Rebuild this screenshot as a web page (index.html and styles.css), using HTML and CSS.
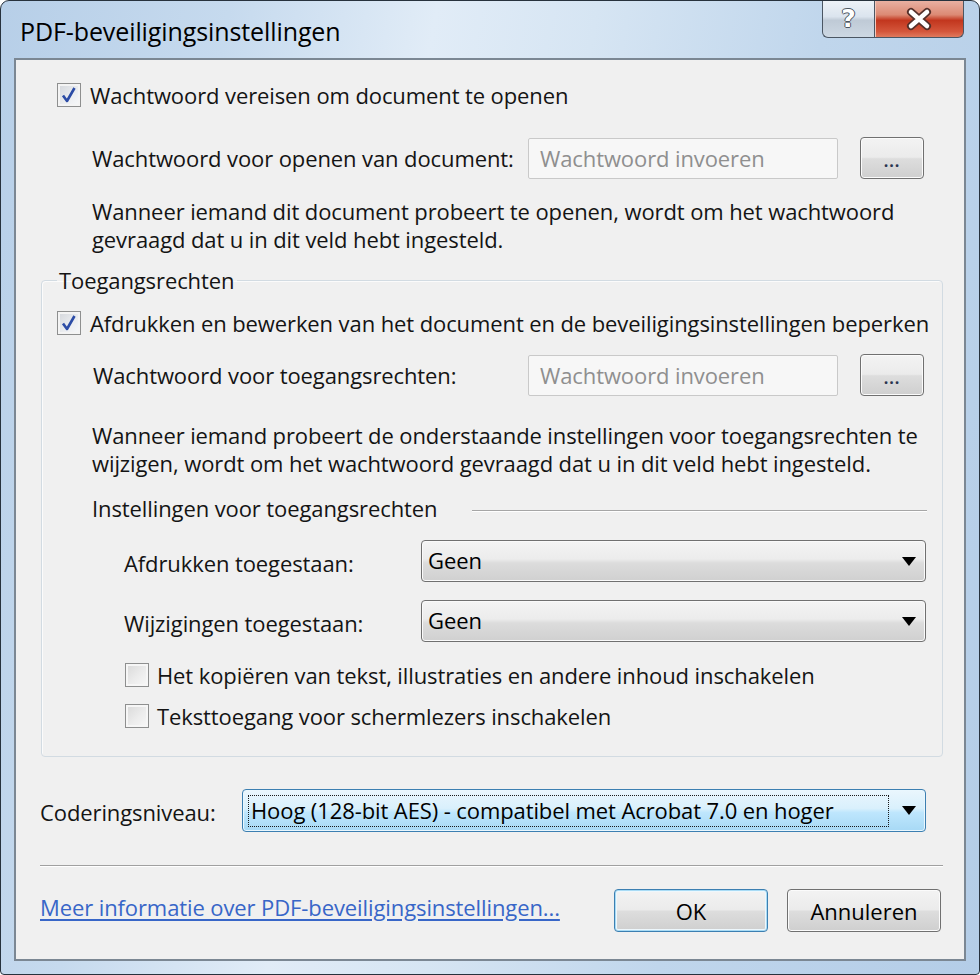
FILE: index.html
```html
<!DOCTYPE html>
<html lang="nl">
<head>
<meta charset="utf-8">
<title>PDF-beveiligingsinstellingen</title>
<link rel="stylesheet" href="styles.css">
</head>
<body>
<div class="window">
  <div class="titlebar">
    <div class="title">PDF-beveiligingsinstellingen</div>
    <div class="caption">
      <div class="cap-btn help"><span class="help-glyph">?</span></div>
      <div class="cap-btn close">
        <svg class="close-x" width="32" height="24" viewBox="0 0 32 24">
          <path d="M8 5 L24 19 M24 5 L8 19" stroke="#55302a" stroke-width="8" stroke-linecap="round" fill="none"/>
          <path d="M8 5 L24 19 M24 5 L8 19" stroke="#ffffff" stroke-width="4.5" stroke-linecap="round" fill="none"/>
        </svg>
      </div>
    </div>
  </div>

  <div class="client">
    <div class="check-row first">
      <span class="cb"><svg class="tick" width="22" height="22" viewBox="0 0 22 22"><path d="M5 11.5 L9 17 L16.5 4" stroke="#2c4ca6" stroke-width="2.6" fill="none" stroke-linejoin="round"/></svg></span>
      <span>Wachtwoord vereisen om document te openen</span>
    </div>

    <div class="pw-row outer">
      <span class="pw-label">Wachtwoord voor openen van document:</span>
      <span class="field">Wachtwoord invoeren</span>
      <span class="btn dots">...</span>
    </div>

    <p class="desc first-desc">Wanneer iemand dit document probeert te openen, wordt om het wachtwoord<br>gevraagd dat u in dit veld hebt ingesteld.</p>

    <fieldset class="group">
      <legend>Toegangsrechten</legend>

      <div class="check-row in-group">
        <span class="cb"><svg class="tick" width="22" height="22" viewBox="0 0 22 22"><path d="M5 11.5 L9 17 L16.5 4" stroke="#2c4ca6" stroke-width="2.6" fill="none" stroke-linejoin="round"/></svg></span>
        <span>Afdrukken en bewerken van het document en de beveiligingsinstellingen beperken</span>
      </div>

      <div class="pw-row inner">
        <span class="pw-label">Wachtwoord voor toegangsrechten:</span>
        <span class="field">Wachtwoord invoeren</span>
        <span class="btn dots">...</span>
      </div>

      <p class="desc second-desc">Wanneer iemand probeert de onderstaande instellingen voor toegangsrechten te<br>wijzigen, wordt om het wachtwoord gevraagd dat u in dit veld hebt ingesteld.</p>

      <div class="subhead">
        <span>Instellingen voor toegangsrechten</span>
        <span class="subline"></span>
      </div>

      <div class="combo-row first-combo">
        <span class="combo-label">Afdrukken toegestaan:</span>
        <span class="combo"><span class="combo-text">Geen</span><span class="arrow"></span></span>
      </div>

      <div class="combo-row second-combo">
        <span class="combo-label">Wijzigingen toegestaan:</span>
        <span class="combo"><span class="combo-text">Geen</span><span class="arrow"></span></span>
      </div>

      <div class="check-row sub-check copy-check">
        <span class="cb empty"></span>
        <span>Het kopiëren van tekst, illustraties en andere inhoud inschakelen</span>
      </div>

      <div class="check-row sub-check reader-check">
        <span class="cb empty"></span>
        <span>Teksttoegang voor schermlezers inschakelen</span>
      </div>
    </fieldset>

    <div class="enc-row">
      <span class="enc-label">Coderingsniveau:</span>
      <span class="combo focused"><span class="focus-rect">Hoog (128-bit AES) - compatibel met Acrobat 7.0 en hoger</span><span class="arrow"></span></span>
    </div>

    <div class="sep"></div>

    <div class="footer">
      <a class="more-link" href="#">Meer informatie over PDF-beveiligingsinstellingen...</a>
      <span class="btn push default">OK</span>
      <span class="btn push">Annuleren</span>
    </div>
  </div>
</div>
</body>
</html>
```

FILE: styles.css
```css
* {
  box-sizing: border-box;
}

html, body {
  margin: 0;
  padding: 0;
  background: #ffffff;
}

body {
  font-family: "Open Sans", "Noto Sans", "Liberation Sans", sans-serif;
  font-size: 22px;
  letter-spacing: -0.1px;
  color: #141414;
}

.window {
  width: 980px;
  height: 975px;
  border: 1px solid #27323d;
  border-radius: 9px 9px 4px 4px;
  background: linear-gradient(100deg, #b7cfe8 0%, #c6daee 20%, #e1ecf7 38%, #d6e5f3 52%, #c0d6ec 72%, #b4cde7 100%);
  display: flex;
  flex-direction: column;
  overflow: hidden;
}

/* ---------- title bar ---------- */
.titlebar {
  height: 57px;
  display: flex;
  justify-content: space-between;
  align-items: flex-start;
}

.title {
  padding: 13px 0 0 19px;
  font-size: 25px;
  letter-spacing: -0.1px;
  color: #000000;
}

.caption {
  display: flex;
  margin-right: 15px;
  margin-top: -1px;
}

.cap-btn {
  height: 38px;
  border: 1px solid #4b5663;
  border-top: none;
  display: flex;
  align-items: center;
  justify-content: center;
}

.help {
  width: 52px;
  border-radius: 0 0 0 6px;
  border-right: none;
  background: linear-gradient(#eef3f8 0%, #dbe4ee 45%, #bfcad6 55%, #cdd8e3 100%);
}

.help-glyph {
  font-family: "DejaVu Sans", sans-serif;
  font-size: 25px;
  font-weight: bold;
  color: #ffffff;
  letter-spacing: 0;
  text-shadow: 1px 0 #4a5560, -1px 0 #4a5560, 0 1px #4a5560, 0 -1px #4a5560;
}

.close {
  width: 90px;
  border-radius: 0 0 6px 0;
  background: linear-gradient(#eab3a5 0%, #dc8a74 40%, #c2361e 55%, #d4563b 85%, #e07a5d 100%);
  box-shadow: inset 1px 0 0 #f4c8bc;
}

/* ---------- client area ---------- */
.client {
  margin: 0 13px;
  height: 903px;
  border: 2px solid #7b8793;
  background: #f0f0f0;
  padding: 21px 21px 0 24px;
  display: flex;
  flex-direction: column;
}

.check-row {
  display: flex;
  align-items: center;
  height: 28px;
  gap: 9px;
  white-space: nowrap;
}

.check-row.first {
  padding-left: 17px;
}

.cb {
  width: 24px;
  height: 24px;
  border: 1px solid #8e8f8f;
  background: linear-gradient(135deg, #d3d6db 0%, #eceef1 60%, #f7f8f9 100%);
  box-shadow: inset 0 0 0 2px #f4f4f4;
  display: flex;
  align-items: center;
  justify-content: center;
  flex: none;
}

.cb.empty {
  background: linear-gradient(135deg, #d8d8d8 0%, #ececec 55%, #f8f8f8 100%);
  box-shadow: inset 0 0 0 2px #f6f6f6;
}

.pw-row {
  display: flex;
  align-items: center;
  height: 42px;
}

.pw-row.outer {
  margin-top: 28px;
  padding-left: 52px;
  margin-right: 19px;
}

.pw-row.inner {
  margin-top: 17px;
  padding-left: 36px;
  margin-right: 3px;
}

.pw-label {
  flex: 1;
  white-space: nowrap;
}

.field {
  width: 310px;
  height: 41px;
  border: 1px solid #c9c9c9;
  border-radius: 2px;
  background: #f7f7f7;
  color: #8f8f8f;
  padding-left: 11px;
  display: flex;
  align-items: center;
  white-space: nowrap;
}

.btn {
  border: 1px solid #707070;
  border-radius: 4px;
  background: linear-gradient(#f3f3f3 0%, #ebebeb 48%, #dddddd 52%, #cfcfcf 100%);
  box-shadow: inset 0 0 0 1px #fbfbfb;
  display: flex;
  align-items: center;
  justify-content: center;
  color: #000000;
}

.dots {
  width: 64px;
  height: 42px;
  margin-left: 22px;
  padding-top: 6px;
  font-weight: bold;
  font-size: 16px;
  letter-spacing: 1px;
  color: #2a3550;
}

.desc {
  margin: 0;
  line-height: 28px;
  white-space: nowrap;
}

.first-desc {
  margin-top: 18px;
  padding-left: 52px;
}

/* ---------- group box ---------- */
.group {
  margin: 13px 0 0 1px;
  padding: 0 15px 26px 15px;
  border: 1px solid #d2dbe2;
  border-radius: 4px;
  min-inline-size: 0;
  box-shadow: inset 1px 1px 0 #fbfbfb;
}

.group legend {
  padding: 0 3px 0 2px;
  margin-left: 0;
  line-height: 28px;
}

.check-row.in-group {
  margin-top: 15px;
}

.second-desc {
  margin-top: 25px;
  padding-left: 35px;
}

.subhead {
  margin-top: 17px;
  height: 28px;
  padding-left: 35px;
  display: flex;
  align-items: center;
  white-space: nowrap;
}

.subline {
  flex: 1;
  margin-left: 35px;
  height: 2px;
  margin-top: 5px;
  border-top: 1px solid #a6a6a6;
  border-bottom: 1px solid #ffffff;
}

.combo-row {
  display: flex;
  align-items: center;
  height: 42px;
  margin-right: 1px;
}

.first-combo {
  margin-top: 18px;
}

.second-combo {
  margin-top: 18px;
}

.combo-label {
  flex: 1;
  padding-left: 67px;
  padding-top: 4px;
  white-space: nowrap;
}

.combo {
  width: 505px;
  height: 42px;
  border: 1px solid #707070;
  border-radius: 4px;
  background: linear-gradient(#f4f4f4 0%, #ececec 45%, #dcdcdc 55%, #d0d0d0 100%);
  box-shadow: inset 0 0 0 1px #fafafa;
  display: flex;
  align-items: center;
  justify-content: space-between;
  padding: 0 8px 0 6px;
  color: #000000;
}

.combo-text {
  padding-bottom: 2px;
}

.arrow {
  width: 0;
  height: 0;
  border-left: 7px solid transparent;
  border-right: 7px solid transparent;
  border-top: 9px solid #000000;
  margin-right: 1px;
}

.sub-check {
  padding-left: 68px;
  gap: 8px;
}

.copy-check {
  margin-top: 19px;
}

.reader-check {
  margin-top: 13px;
}

/* ---------- encryption ---------- */
.enc-row {
  margin-top: 32px;
  margin-right: 17px;
  height: 43px;
  display: flex;
  align-items: center;
}

.enc-label {
  flex: 1;
  padding-top: 2px;
  white-space: nowrap;
}

.combo.focused {
  width: 684px;
  flex: none;
  height: 43px;
  border-color: #3c7fb1;
  background: linear-gradient(#eaf6fd 0%, #d9f0fc 45%, #bee6fd 55%, #a7d9f5 100%);
  box-shadow: inset 0 0 0 1px #e9f7fe;
  padding: 0 8px 0 5px;
}

.focus-rect {
  width: 641px;
  height: 32px;
  border: 1px dotted #1a1a1a;
  display: flex;
  align-items: center;
  padding-left: 2px;
  padding-bottom: 1px;
  white-space: nowrap;
  overflow: hidden;
}

/* ---------- footer ---------- */
.sep {
  margin-top: 33px;
  height: 2px;
  border-top: 1px solid #a0a0a0;
  border-bottom: 1px solid #ffffff;
}

.footer {
  margin-top: 22px;
  margin-right: 2px;
  height: 43px;
  display: flex;
  align-items: center;
}

.more-link {
  flex: 1;
  color: #3866c8;
  text-decoration: underline;
  text-underline-offset: 3px;
  padding-bottom: 8px;
  white-space: nowrap;
}

.push {
  width: 154px;
  height: 43px;
  flex: none;
  letter-spacing: 0;
}

.push + .push {
  margin-left: 19px;
}

.push.default {
  border-color: #3c7fb1;
  box-shadow: inset 0 0 0 1px #a8dbf5, inset 0 0 0 2px #eef7fc;
}
```
